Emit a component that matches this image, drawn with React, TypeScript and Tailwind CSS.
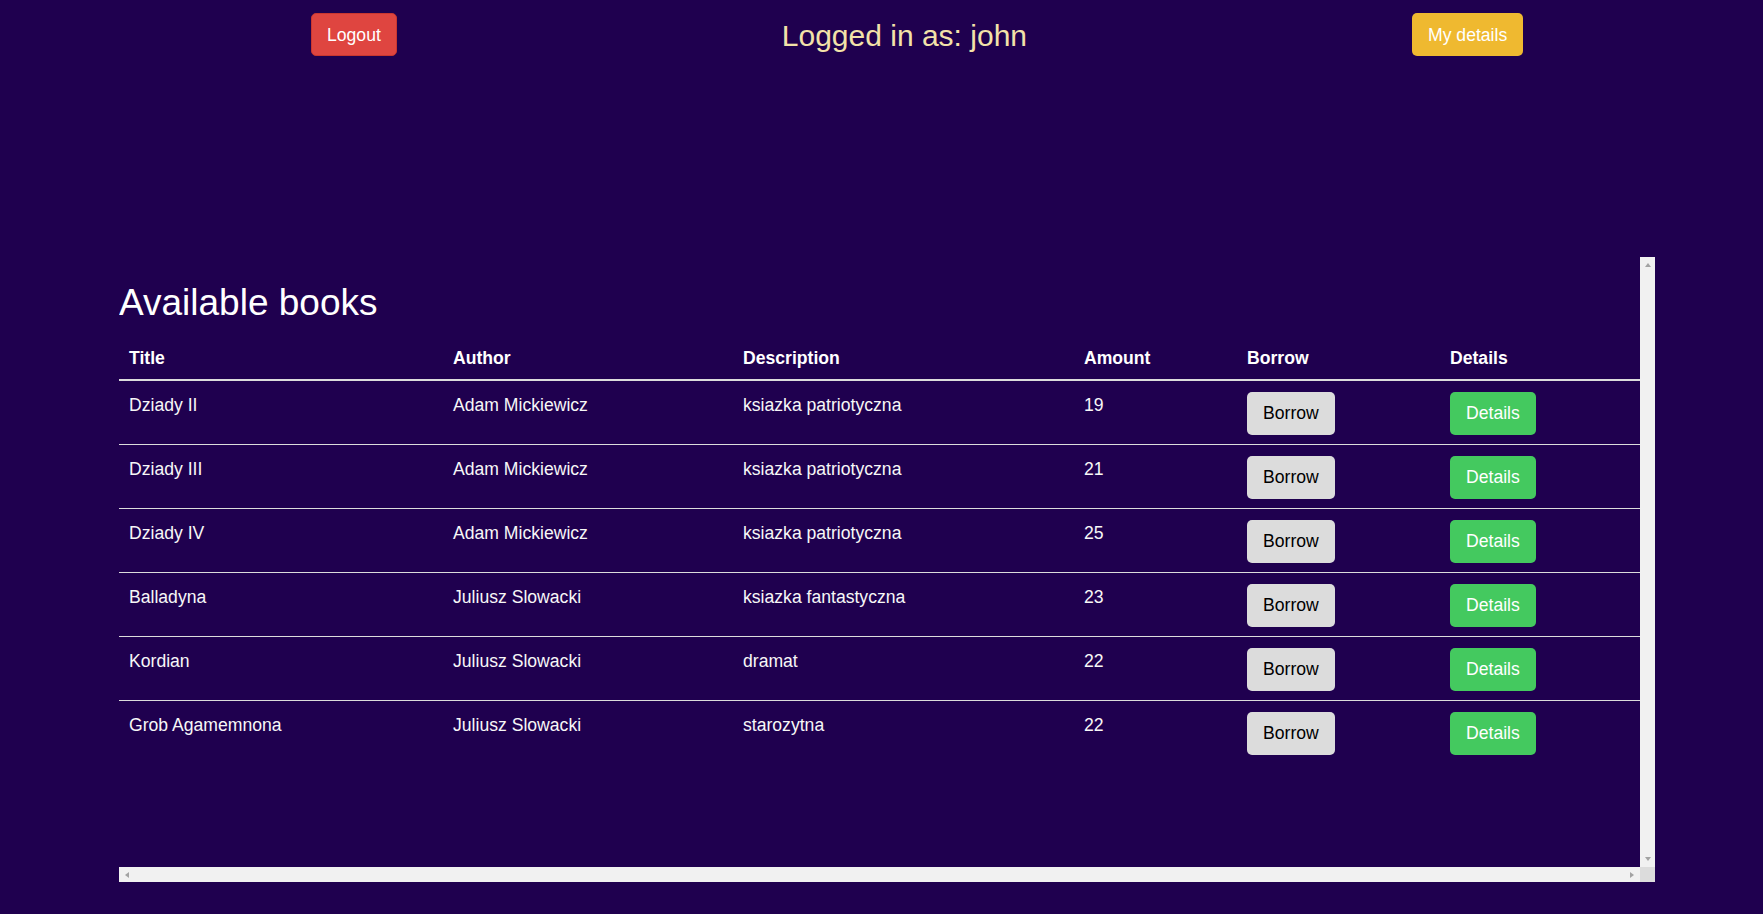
const books = [
  { title: "Dziady II", author: "Adam Mickiewicz", description: "ksiazka patriotyczna", amount: 19 },
  { title: "Dziady III", author: "Adam Mickiewicz", description: "ksiazka patriotyczna", amount: 21 },
  { title: "Dziady IV", author: "Adam Mickiewicz", description: "ksiazka patriotyczna", amount: 25 },
  { title: "Balladyna", author: "Juliusz Slowacki", description: "ksiazka fantastyczna", amount: 23 },
  { title: "Kordian", author: "Juliusz Slowacki", description: "dramat", amount: 22 },
  { title: "Grob Agamemnona", author: "Juliusz Slowacki", description: "starozytna", amount: 22 },
]

const btn = "h-[43px] rounded-[5px] text-[17.6px] leading-none pt-[2px] cursor-pointer"
const td = "pl-[10px] pt-[14px] pb-[6px] align-top"
const tdBtn = "pl-[10px] pt-[11px] pb-[9px] align-top"

function Arrow({ dir }: { dir: "up" | "down" | "left" | "right" }) {
  const points = {
    up: "4,1 7,5 1,5",
    down: "1,1 7,1 4,5",
    left: "5,1 5,7 1,4",
    right: "1,1 1,7 5,4",
  }[dir]
  const size = dir === "up" || dir === "down" ? { w: 8, h: 6 } : { w: 6, h: 8 }
  return (
    <svg width={size.w} height={size.h} viewBox={`0 0 ${size.w} ${size.h}`}>
      <polygon points={points} fill="#a3a3a3" />
    </svg>
  )
}

export default function App() {
  return (
    <div className="min-h-screen bg-[#1f004f] font-['Liberation_Sans',Arial,sans-serif] text-white">
      {/* Top bar */}
      <header className="flex items-center gap-[385px] pl-[311px] pt-[13px]">
        <button className={`${btn} px-[15px] bg-[#df4540] border border-[#c9372f] text-white`}>Logout</button>
        <span className="text-[30px] leading-[1.15] mt-[3px] text-[#f3e2a9]">Logged in as: john</span>
        <button className={`${btn} px-4 bg-[#efb930] text-white`}>My details</button>
      </header>

      {/* Books list with scrollbars */}
      <div className="ml-[119px] mt-[201px] w-[1536px] h-[625px] flex flex-col">
        <div className="flex flex-1 min-h-0">
          <div className="flex-1 overflow-hidden">
            <h1 className="text-[37px] font-normal leading-[1.15] mt-[25px] mb-[12px]">Available books</h1>
            <table className="w-full table-fixed border-collapse text-[17.6px] leading-[1.15] text-[#f7f7f7]">
              <thead>
                <tr className="border-b-2 border-[#dcdcdc] text-left text-white">
                  <th className="w-[324px] pl-[10px] py-[11px] font-bold">Title</th>
                  <th className="w-[290px] pl-[10px] py-[11px] font-bold">Author</th>
                  <th className="w-[341px] pl-[10px] py-[11px] font-bold">Description</th>
                  <th className="w-[163px] pl-[10px] py-[11px] font-bold">Amount</th>
                  <th className="w-[203px] pl-[10px] py-[11px] font-bold">Borrow</th>
                  <th className="w-[200px] pl-[10px] py-[11px] font-bold">Details</th>
                </tr>
              </thead>
              <tbody>
                {books.map((b, i) => (
                  <tr key={b.title} className={i > 0 ? "border-t border-[#dcdcdc]" : ""}>
                    <td className={td}>{b.title}</td>
                    <td className={td}>{b.author}</td>
                    <td className={td}>{b.description}</td>
                    <td className={td}>{b.amount}</td>
                    <td className={tdBtn}>
                      <button className={`${btn} px-4 bg-[#dcdcdc] text-black`}>Borrow</button>
                    </td>
                    <td className={tdBtn}>
                      <button className={`${btn} px-4 bg-[#44c95f] text-white`}>Details</button>
                    </td>
                  </tr>
                ))}
              </tbody>
            </table>
          </div>
          {/* vertical scrollbar */}
          <div className="w-[15px] bg-[#f1f1f1] flex flex-col items-center justify-between py-[5px]">
            <Arrow dir="up" />
            <Arrow dir="down" />
          </div>
        </div>
        {/* horizontal scrollbar */}
        <div className="flex h-[15px]">
          <div className="flex-1 bg-[#f1f1f1] flex items-center justify-between px-[5px]">
            <Arrow dir="left" />
            <Arrow dir="right" />
          </div>
          <div className="w-[15px] bg-[#dcdcdc]" />
        </div>
      </div>
    </div>
  )
}
